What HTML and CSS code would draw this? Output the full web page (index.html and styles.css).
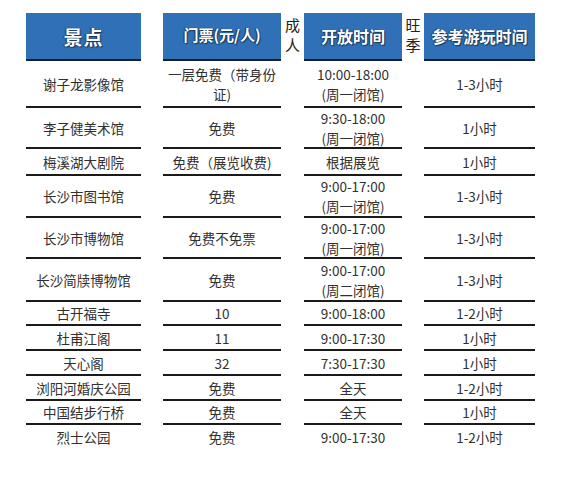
FILE: index.html
```html
<!DOCTYPE html>
<html lang="zh">
<head>
<meta charset="utf-8">
<link rel="stylesheet" href="styles.css">
</head>
<body>
<div class="sheet">
  <div class="hd h1">景点</div><div class="sp"></div>
  <div class="hd h2">门票(元/人)</div><div class="side">成<br>人</div>
  <div class="hd h3">开放时间</div><div class="side">旺<br>季</div>
  <div class="hd h4">参考游玩时间</div>

  <div class="c">谢子龙影像馆</div><div class="sp"></div><div class="c">一层免费（带身份<br>证)</div><div class="sp"></div><div class="c">10:00-18:00<br>(周一闭馆)</div><div class="sp"></div><div class="c">1-3小时</div>
  <div class="c">李子健美术馆</div><div class="sp"></div><div class="c">免费</div><div class="sp"></div><div class="c">9:30-18:00<br>(周一闭馆)</div><div class="sp"></div><div class="c">1小时</div>
  <div class="c">梅溪湖大剧院</div><div class="sp"></div><div class="c">免费（展览收费)</div><div class="sp"></div><div class="c">根据展览</div><div class="sp"></div><div class="c">1小时</div>
  <div class="c">长沙市图书馆</div><div class="sp"></div><div class="c">免费</div><div class="sp"></div><div class="c">9:00-17:00<br>(周一闭馆)</div><div class="sp"></div><div class="c">1-3小时</div>
  <div class="c">长沙市博物馆</div><div class="sp"></div><div class="c">免费不免票</div><div class="sp"></div><div class="c">9:00-17:00<br>(周一闭馆)</div><div class="sp"></div><div class="c">1-3小时</div>
  <div class="c">长沙简牍博物馆</div><div class="sp"></div><div class="c">免费</div><div class="sp"></div><div class="c">9:00-17:00<br>(周二闭馆)</div><div class="sp"></div><div class="c">1-3小时</div>
  <div class="c">古开福寺</div><div class="sp"></div><div class="c">10</div><div class="sp"></div><div class="c">9:00-18:00</div><div class="sp"></div><div class="c">1-2小时</div>
  <div class="c">杜甫江阁</div><div class="sp"></div><div class="c">11</div><div class="sp"></div><div class="c">9:00-17:30</div><div class="sp"></div><div class="c">1小时</div>
  <div class="c">天心阁</div><div class="sp"></div><div class="c">32</div><div class="sp"></div><div class="c">7:30-17:30</div><div class="sp"></div><div class="c">1小时</div>
  <div class="c">浏阳河婚庆公园</div><div class="sp"></div><div class="c">免费</div><div class="sp"></div><div class="c">全天</div><div class="sp"></div><div class="c">1-2小时</div>
  <div class="c">中国结步行桥</div><div class="sp"></div><div class="c">免费</div><div class="sp"></div><div class="c">全天</div><div class="sp"></div><div class="c">1小时</div>
  <div class="c last">烈士公园</div><div class="sp"></div><div class="c last">免费</div><div class="sp"></div><div class="c last">9:00-17:30</div><div class="sp"></div><div class="c last">1-2小时</div>
</div>
</body>
</html>
```
FILE: styles.css
```css
html, body {
  margin: 0;
  padding: 0;
  background: #ffffff;
}
body {
  font-family: "Noto Sans CJK SC", "Noto Sans", sans-serif;
  color: #303030;
}
.sheet {
  display: grid;
  grid-template-columns: 115px 22px 118px 23px 98px 22px 111px;
  grid-template-rows: 48px 47px 41px 27px 42px 41px 43px 24px 25px 25px 25px 24px 24px;
  padding: 13px 0 0 26px;
}
.hd {
  background: #2f70b6;
  border-bottom: 2px solid #15202c;
  box-sizing: border-box;
  display: flex;
  align-items: center;
  justify-content: center;
  color: #ffffff;
  font-weight: 700;
  font-size: 16px;
  text-shadow: 1px 1px 1px #1b3553, -1px 0 1px #1b3553;
}
.h1 {
  font-size: 19px;
  letter-spacing: 1px;
}
.h2 {
  font-size: 15px;
  padding-bottom: 4px;
}
.h3 {
  font-size: 16px;
}
.h4 {
  font-size: 16px;
}
.side {
  display: flex;
  align-items: center;
  justify-content: center;
  font-size: 15px;
  line-height: 20px;
  color: #222;
  text-align: center;
  padding-bottom: 4px;
}
.c {
  border-bottom: 2px solid #1a1a1a;
  box-sizing: border-box;
  display: flex;
  align-items: center;
  justify-content: center;
  text-align: center;
  font-size: 13.5px;
  line-height: 20px;
}
.c.last {
  border-bottom: none;
}
.sp {
  min-width: 0;
}
```
